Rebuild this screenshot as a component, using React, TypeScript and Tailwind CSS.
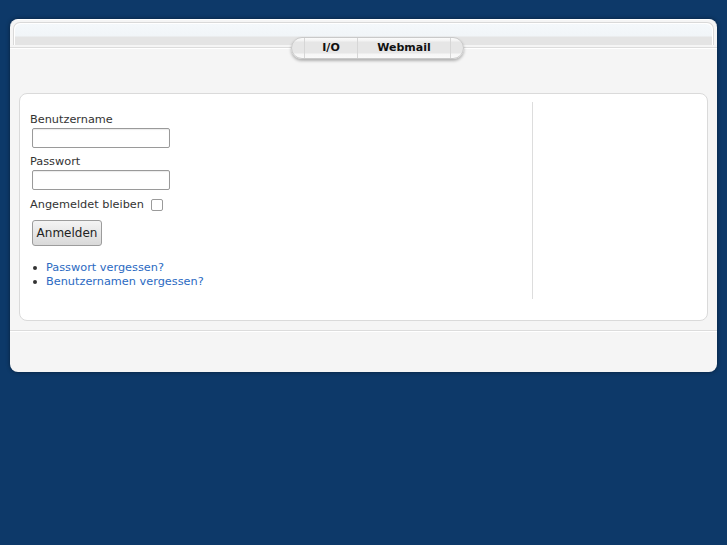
import React from "react";

export default function App() {
  return (
    <div
      className="w-full h-[545px] bg-[#0d3969] pt-[19px] px-[10px]"
      style={{ fontFamily: "'DejaVu Sans', 'Liberation Sans', sans-serif" }}
    >
      <div className="relative h-[353px] rounded-[8px] bg-[#f5f5f5] border-t border-white shadow-[0_0_4px_rgba(0,0,0,0.45)]">
        {/* header band */}
        <div className="px-[3px] pt-[2px]">
          <div className="h-[23px] rounded-t-[7px] border-t border-x border-[#d9d9d9] bg-white pt-[1px] px-[1px]">
            <div className="h-full rounded-t-[6px] bg-[linear-gradient(to_bottom,#f4f8fb_0,#f1f5f8_12px,#e4e4e4_13px,#e4e4e4_100%)]" />
          </div>
        </div>
        <div className="mt-[2px] h-[1px] bg-[#dcdcdc]" />
        <div className="h-[1px] bg-white" />

        {/* tab pill */}
        <div className="absolute top-[17px] left-[281px] w-[173px] h-[22px] rounded-[11px] border border-[#c9c9c9] shadow-[0_2px_3px_rgba(0,0,0,0.28)] bg-[linear-gradient(to_bottom,#fbfbfb_0,#f2f2f2_3px,#e6e6e6_4px,#e6e6e6_15px,#f6f6f6_16px,#f9f9f9_100%)] flex text-[11px] font-bold text-[#111] leading-[20px]">
          <div className="w-[13px] border-r border-[#d6d6d6]" />
          <div className="w-[53px] border-r border-[#d6d6d6] flex justify-center pb-[2px]">I/O</div>
          <div className="w-[93px] border-r border-[#d6d6d6] flex justify-center pb-[2px]">Webmail</div>
          <div className="flex-1" />
        </div>

        {/* content box */}
        <div className="mx-[9px] mt-[44px] h-[228px] rounded-[8px] border border-[#dadada] bg-white flex">
          <div className="w-[513px] mt-[8px] h-[197px] border-r border-[#dddddd] pl-[10px] pt-[11px] text-[11.3px] leading-[14px] text-[#333]">
            <div>Benutzername</div>
            <input
              type="text"
              className="block mt-[1px] ml-[2px] w-[138px] h-[20px] border border-[#9a9a9a] rounded-[2px] bg-white shadow-[inset_0_1px_1px_rgba(0,0,0,0.08)]"
            />
            <div className="mt-[7px]">Passwort</div>
            <input
              type="password"
              className="block mt-[1px] ml-[2px] w-[138px] h-[20px] border border-[#9a9a9a] rounded-[2px] bg-white shadow-[inset_0_1px_1px_rgba(0,0,0,0.08)]"
            />
            <div className="mt-[8px] flex items-center h-[14px]">
              <span>Angemeldet bleiben</span>
              <span className="ml-[7px] w-[12px] h-[12px] border border-[#9a9a9a] rounded-[2px] bg-white inline-block" />
            </div>
            <button className="block mt-[8px] ml-[2px] w-[70px] h-[26px] rounded-[3px] border border-[#9c9c9c] bg-[linear-gradient(to_bottom,#f4f4f4,#d9d9d9)] text-[12px] text-[#222] leading-[24px]">
              Anmelden
            </button>
            <div className="mt-[15px]">
              <div className="flex items-center h-[14px]">
                <span className="ml-[3px] w-[4px] h-[4px] rounded-full bg-[#333]" />
                <a className="ml-[9px] text-[#2b6ac2]" href="#">Passwort vergessen?</a>
              </div>
              <div className="flex items-center h-[14px]">
                <span className="ml-[3px] w-[4px] h-[4px] rounded-full bg-[#333]" />
                <a className="ml-[9px] text-[#2b6ac2]" href="#">Benutzernamen vergessen?</a>
              </div>
            </div>
          </div>
          <div className="flex-1" />
        </div>

        <div className="mt-[9px] h-[1px] bg-[#dcdcdc]" />
        <div className="h-[1px] bg-white" />
      </div>
    </div>
  );
}
